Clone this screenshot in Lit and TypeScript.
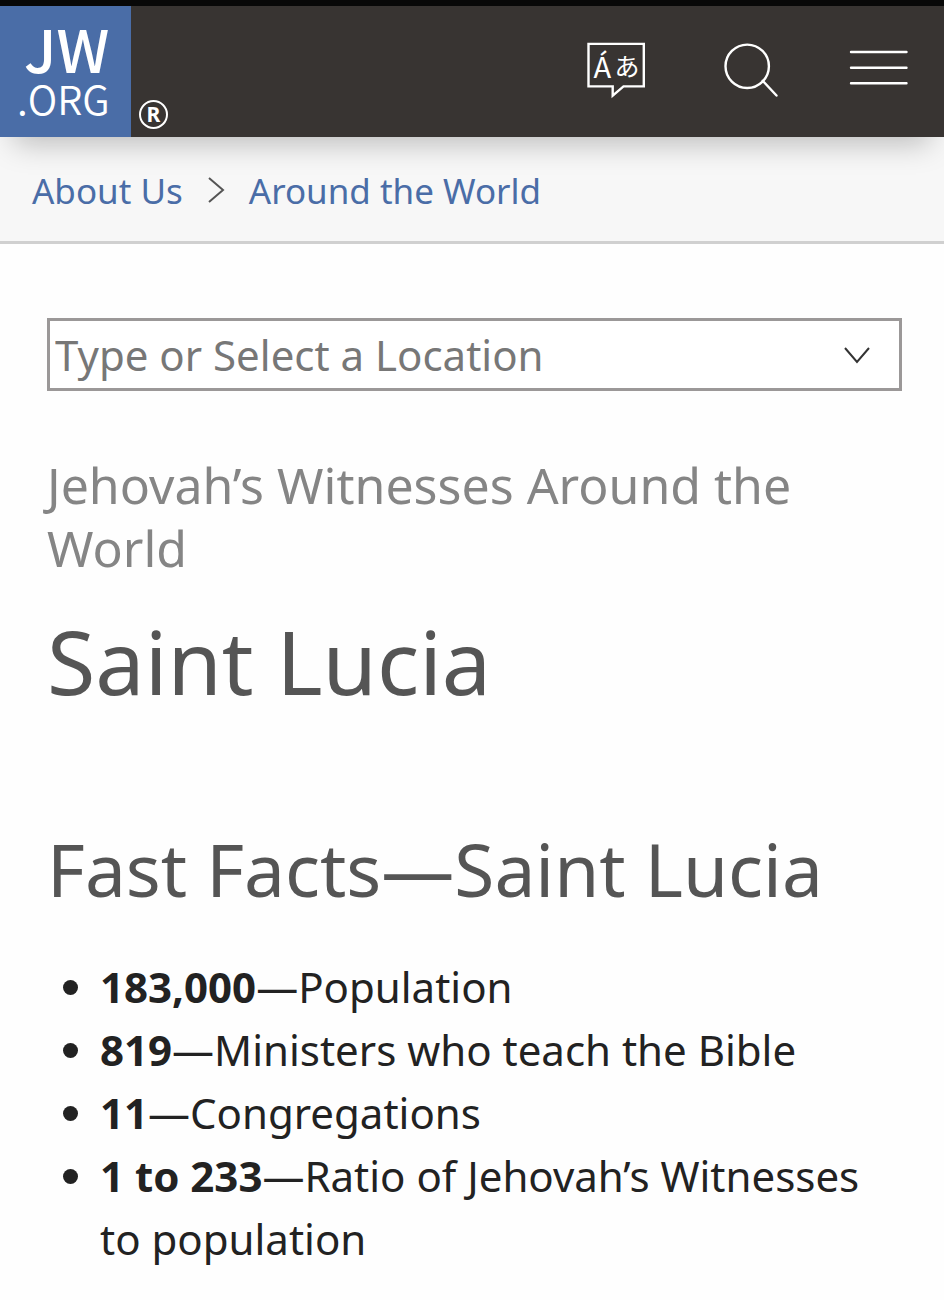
import { LitElement, html, css, svg } from "lit";
import { customElement, property } from "lit/decorators.js";

interface Fact {
  value: string;
  label: string;
}

const FACTS: Fact[] = [
  { value: "183,000", label: "Population" },
  { value: "819", label: "Ministers who teach the Bible" },
  { value: "11", label: "Congregations" },
  { value: "1 to 233", label: "Ratio of Jehovah’s Witnesses to population" },
];

@customElement("site-header")
class SiteHeader extends LitElement {
  static styles = css`
    :host {
      display: block;
      position: relative;
      z-index: 1;
      border-top: 6px solid #080808;
      background: #383432;
      box-shadow: 0 20px 28px -14px rgba(0, 0, 0, 0.25);
    }
    .bar {
      display: flex;
      align-items: stretch;
      height: 131px;
    }
    .brand {
      display: flex;
      align-items: flex-end;
      gap: 8px;
      color: #fff;
      text-decoration: none;
    }
    .logo {
      display: block;
      width: 131px;
      height: 131px;
      background: #4a6da7;
    }
    .logo text {
      fill: #fff;
      font-family: "Noto Sans CJK JP", sans-serif;
    }
    .jw {
      font-size: 59px;
      font-weight: 500;
    }
    .org {
      font-size: 40px;
      font-weight: 350;
    }
    .mark {
      display: flex;
      align-items: center;
      justify-content: center;
      box-sizing: border-box;
      width: 29px;
      height: 29px;
      margin-bottom: 8px;
      border: 2px solid #fff;
      border-radius: 50%;
      font: 700 21px/25px "Noto Sans", sans-serif;
    }
    .tools {
      display: flex;
      align-items: flex-start;
      gap: 70px;
      margin-left: auto;
      padding: 35px 33px 0 0;
    }
    .tool {
      display: block;
      padding: 0;
      border: 0;
      background: none;
      cursor: pointer;
    }
    .tool svg {
      display: block;
      width: 62px;
      height: 60px;
      fill: none;
      stroke: #fff;
      stroke-width: 2.4;
    }
    .tool text {
      fill: #fff;
      stroke: none;
      font-family: "Noto Sans CJK JP", sans-serif;
    }
  `;

  render() {
    const language = svg`
      <path d="M3.500 2.900h55.300v42.500H38.500L27.700 54.600V45.400H3.500z"></path>
      <text x="8.500" y="36.700" font-size="29">Á</text>
      <text x="29.500" y="35" font-size="25">あ</text>`;
    const search = svg`
      <circle cx="30.200" cy="25.300" r="21.700"></circle>
      <path d="M45.700 39.700L59.500 54.500" stroke-linecap="round"></path>`;
    const menu = svg`
      <path d="M2 11h55.500M2 26.700h55.500M2 42.300h55.500" stroke-linecap="round"></path>`;
    return html`
      <header class="bar">
        <a class="brand" href="#home" aria-label="JW.ORG home">
          <svg class="logo" viewBox="0 0 131 131">
            <text class="jw" x="24" y="67">JW</text>
            <text class="org" x="17" y="109">.ORG</text>
          </svg>
          <span class="mark">R</span>
        </a>
        <nav class="tools" aria-label="Site tools">
          <button class="tool" aria-label="Language"><svg viewBox="0 0 62 60">${language}</svg></button>
          <button class="tool" aria-label="Search"><svg viewBox="0 0 62 60">${search}</svg></button>
          <button class="tool" aria-label="Menu"><svg viewBox="0 0 62 60">${menu}</svg></button>
        </nav>
      </header>
    `;
  }
}

@customElement("bread-crumbs")
class BreadCrumbs extends LitElement {
  static styles = css`
    :host {
      display: block;
      background: #f7f7f7;
      border-bottom: 3px solid #d0d0d0;
    }
    .trail {
      display: flex;
      align-items: center;
      gap: 23px;
      padding: 30px 32px 26px;
      font-size: 35px;
      line-height: 48px;
    }
    .link {
      color: #4a6da7;
      text-decoration: none;
    }
    .sep {
      width: 20px;
      height: 28px;
      fill: none;
      stroke: #555;
      stroke-width: 2;
    }
  `;

  render() {
    return html`
      <nav class="trail" aria-label="Breadcrumb">
        <a class="link" href="#about">About Us</a>
        <svg class="sep" viewBox="0 0 20 28"><path d="M3 1l14 12L3 25"></path></svg>
        <a class="link" href="#world">Around the World</a>
      </nav>
    `;
  }
}

@customElement("location-picker")
class LocationPicker extends LitElement {
  static styles = css`
    :host {
      display: block;
    }
    .box {
      display: flex;
      align-items: center;
      border: 3px solid #9b9898;
      background: #fff;
    }
    .field {
      flex: 1;
      min-width: 0;
      height: 67px;
      box-sizing: border-box;
      padding: 0 5px;
      border: 0;
      outline: 0;
      background: none;
      color: #222;
      font: 42px/60px "Noto Sans", sans-serif;
    }
    .field::placeholder {
      color: #777;
      opacity: 1;
    }
    .toggle {
      padding: 0 28px;
      border: 0;
      background: none;
      cursor: pointer;
    }
    .toggle svg {
      display: block;
      width: 28px;
      height: 20px;
      fill: none;
      stroke: #333;
      stroke-width: 2;
    }
  `;

  render() {
    return html`
      <div class="box">
        <input class="field" type="text" aria-label="Location" placeholder="Type or Select a Location" />
        <button class="toggle" aria-label="Show locations">
          <svg viewBox="0 0 28 20"><path d="M2 3l12 14L26 3"></path></svg>
        </button>
      </div>
    `;
  }
}

@customElement("fact-list")
class FactList extends LitElement {
  @property({ attribute: false }) facts: Fact[] = [];

  static styles = css`
    :host {
      display: block;
    }
    .list {
      margin: 0;
      padding: 0 0 0 53px;
      color: #222;
      font-size: 42px;
      line-height: 63px;
    }
    .value {
      font-weight: 700;
    }
  `;

  render() {
    return html`
      <ul class="list">
        ${this.facts.map((f) => html`<li><strong class="value">${f.value}</strong>—${f.label}</li>`)}
      </ul>
    `;
  }
}

@customElement("app-root")
class AppRoot extends LitElement {
  static styles = css`
    :host {
      display: block;
      min-height: 100vh;
      background: #fefefe;
      font-family: "Noto Sans", sans-serif;
    }
    .content {
      padding: 74px 42px 26px 47px;
    }
    .context {
      margin: 63px 0 0;
      color: #858585;
      font-size: 50px;
      line-height: 63px;
    }
    .title,
    .section {
      color: #555;
      font-weight: 400;
    }
    .title {
      margin: 28px 0 0;
      font-size: 88px;
      line-height: 106px;
    }
    .section {
      margin: 111px 0 42px;
      font-size: 73px;
      line-height: 88px;
    }
  `;

  render() {
    return html`
      <site-header></site-header>
      <bread-crumbs></bread-crumbs>
      <main class="content">
        <location-picker></location-picker>
        <p class="context">Jehovah’s Witnesses Around the World</p>
        <h1 class="title">Saint Lucia</h1>
        <h2 class="section">Fast Facts—Saint Lucia</h2>
        <fact-list .facts=${FACTS}></fact-list>
      </main>
    `;
  }
}
